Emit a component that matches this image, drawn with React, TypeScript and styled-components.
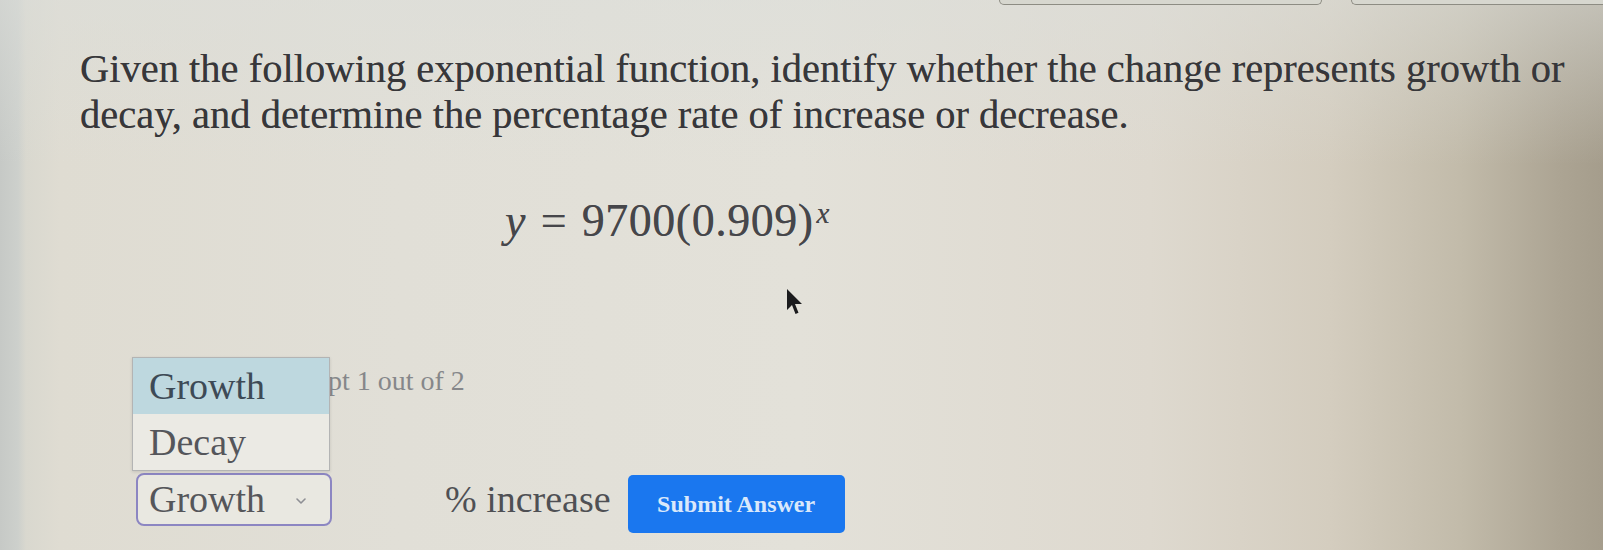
import React from "react";
import styled, { createGlobalStyle } from "styled-components";

const GlobalStyle = createGlobalStyle`
  html, body {
    margin: 0;
    padding: 0;
  }
  body {
    width: 1603px;
    height: 550px;
    overflow: hidden;
    font-family: "Liberation Serif", "Times New Roman", serif;
  }
`;

const Page = styled.div`
  position: relative;
  width: 1603px;
  height: 550px;
  overflow: hidden;
  background:
    linear-gradient(180deg, rgba(220, 222, 218, 0.55) 0%, rgba(220, 222, 218, 0) 30%),
    linear-gradient(
      90deg,
      #c6c9c6 0px,
      #cdd0cc 18px,
      #d9d8cf 26px,
      #dfdcd2 60px,
      #e1dfd7 400px,
      #e3e1d9 800px,
      #ded9cf 1150px,
      #d4cdbf 1330px,
      #c2bbaa 1460px,
      #aca493 1560px,
      #a59d8c 1603px
    );
`;

const Toolbar = styled.div`
  display: flex;
  justify-content: flex-end;
  gap: 29px;
  height: 6px;
`;

const ToolButton = styled.div<{ $width: number; $open?: boolean }>`
  width: ${(p) => p.$width}px;
  height: 4px;
  border: 1.5px solid #8d8c83;
  border-top: none;
  border-right: ${(p) => (p.$open ? "none" : "1.5px solid #8d8c83")};
  border-radius: ${(p) => (p.$open ? "0 0 0 6px" : "0 0 6px 6px")};
  background: #d7d7cf;
`;

const Content = styled.div`
  padding: 40px 30px 0 80px;
`;

const Prompt = styled.p`
  margin: 0;
  font-size: 40.5px;
  line-height: 46px;
  color: #37373a;
  text-shadow: 0 0 0.6px rgba(40, 40, 45, 0.6);
`;

const Equation = styled.div`
  margin: 57px 0 0 425px;
  font-family: "Liberation Serif", "Times New Roman", serif;
  font-size: 46px;
  line-height: 52px;
  letter-spacing: 0.5px;
  color: #46464a;
  white-space: nowrap;
  text-shadow: 0 0 0.5px rgba(50, 50, 55, 0.6);
`;

const Var = styled.span`
  font-style: italic;
`;

const Rel = styled.span`
  margin: 0 0.32em;
`;

const Sup = styled.sup`
  font-style: italic;
  font-size: 29px;
  vertical-align: 0;
  position: relative;
  top: -0.45em;
  margin-left: 3px;
`;

const Attempt = styled.div`
  margin: 114px 0 0 178px;
  font-size: 28px;
  line-height: 30px;
  color: #86878a;
`;

const AnswerRow = styled.div`
  display: flex;
  align-items: center;
  margin: 69px 0 0 56px;
`;

const SelectWrap = styled.div`
  position: relative;
  width: 196px;
`;

const SelectBox = styled.div`
  box-sizing: border-box;
  display: flex;
  align-items: center;
  justify-content: space-between;
  height: 53px;
  padding: 0 22px 0 11px;
  border: 2px solid #8c86c2;
  border-radius: 8px;
  background: #e9e8e1;
  font-size: 38px;
  color: #55565a;
`;

const Chevron = styled.svg`
  width: 14px;
  height: 14px;
  margin-top: 4px;
`;

const Menu = styled.ul`
  position: absolute;
  left: -4px;
  bottom: calc(100% + 2px);
  box-sizing: border-box;
  width: 198px;
  margin: 0;
  padding: 0;
  list-style: none;
  border: 1px solid #b3b4b4;
  background: #ebeae4;
  box-shadow: 0 1px 3px rgba(0, 0, 0, 0.12);
`;

const Option = styled.li<{ $active?: boolean }>`
  height: 56px;
  display: flex;
  align-items: center;
  padding-left: 16px;
  font-size: 38px;
  color: ${(p) => (p.$active ? "#3d4a56" : "#55565b")};
  background: ${(p) => (p.$active ? "#bed8df" : "transparent")};
`;

const Unit = styled.span`
  margin-left: 113px;
  font-size: 38px;
  color: #4f5054;
`;

const SubmitButton = styled.button`
  margin-left: 17px;
  margin-top: 10px;
  width: 217px;
  height: 58px;
  border: none;
  border-radius: 5px;
  background: #1a77ef;
  color: #d9e8fb;
  font-family: "Liberation Serif", "Times New Roman", serif;
  font-weight: bold;
  font-size: 24px;
  cursor: pointer;
`;

const Cursor = styled.svg`
  position: absolute;
  left: 786px;
  top: 288px;
  width: 17px;
  height: 28px;
`;

export default function App() {
  return (
    <Page>
      <GlobalStyle />
      <Toolbar>
        <ToolButton $width={321} />
        <ToolButton $width={251} $open />
      </Toolbar>
      <Content>
        <Prompt>
          Given the following exponential function, identify whether the change represents growth or
          decay, and determine the percentage rate of increase or decrease.
        </Prompt>
        <Equation>
          <Var>y</Var>
          <Rel>=</Rel>
          9700(0.909)
          <Sup>x</Sup>
        </Equation>
        <Attempt>Attempt 1 out of 2</Attempt>
        <AnswerRow>
          <SelectWrap>
            <Menu>
              <Option $active>Growth</Option>
              <Option>Decay</Option>
            </Menu>
            <SelectBox>
              <span>Growth</span>
              <Chevron viewBox="0 0 14 14" fill="none" stroke="#8e8f94" strokeWidth="1.6">
                <path d="M3 5l4 4 4-4" strokeLinecap="round" strokeLinejoin="round" />
              </Chevron>
            </SelectBox>
          </SelectWrap>
          <Unit>% increase</Unit>
          <SubmitButton type="button">Submit Answer</SubmitButton>
        </AnswerRow>
      </Content>
      <Cursor viewBox="0 0 17 28">
        <path d="M1 1 L1 22 L6 17 L9.5 26 L12.5 24.8 L9 16 L16 16 Z" fill="#1b1b1d" />
      </Cursor>
    </Page>
  );
}
